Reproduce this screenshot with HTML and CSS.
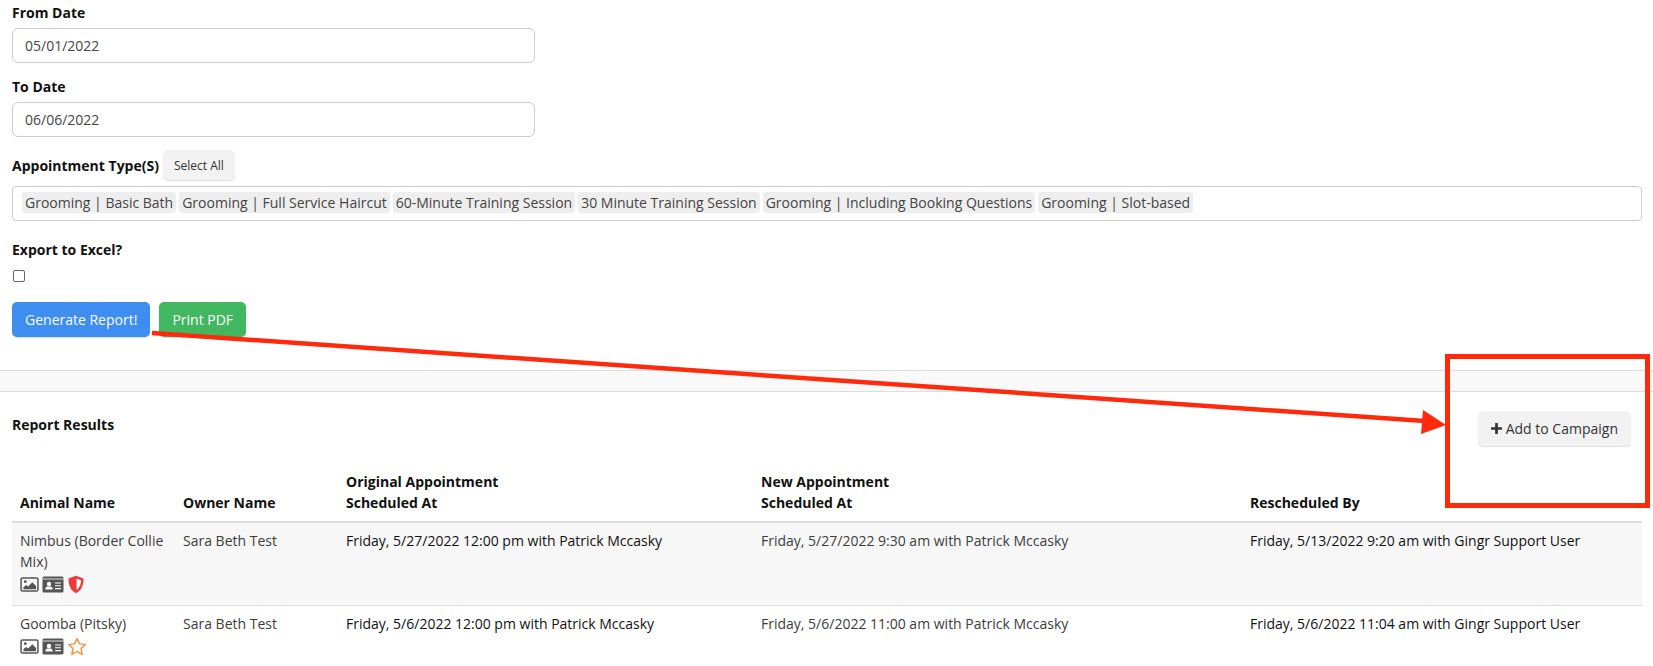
FILE: index.html
```html
<!DOCTYPE html>
<html lang="en">
<head>
<meta charset="utf-8">
<title>Report</title>
<link rel="stylesheet" href="styles.css">
</head>
<body>
<form class="filters">
  <div class="field">
    <label class="lbl">From Date</label>
    <div class="input">05/01/2022</div>
  </div>
  <div class="field">
    <label class="lbl">To Date</label>
    <div class="input">06/06/2022</div>
  </div>
  <div class="field field-types">
    <div class="lbl-row"><label class="lbl">Appointment Type(S)</label><button type="button" class="btn btn-light btn-sm">Select All</button></div>
    <div class="tags">
      <span class="tag">Grooming | Basic Bath</span>
      <span class="tag">Grooming | Full Service Haircut</span>
      <span class="tag">60-Minute Training Session</span>
      <span class="tag">30 Minute Training Session</span>
      <span class="tag">Grooming | Including Booking Questions</span>
      <span class="tag">Grooming | Slot-based</span>
    </div>
  </div>
  <div class="field">
    <label class="lbl">Export to Excel?</label>
    <div class="check-row"><span class="check"></span></div>
  </div>
  <div class="actions">
    <button type="button" class="btn btn-blue">Generate Report!</button>
    <button type="button" class="btn btn-green">Print PDF</button>
  </div>
</form>
<div class="band"></div>
<section class="results">
  <div class="results-head">
    <strong class="results-title">Report Results</strong>
    <button type="button" class="btn btn-light btn-add">
      <svg class="plus" viewBox="0 0 12 12"><path d="M6 1v10M1 6h10"/></svg>Add to Campaign</button>
  </div>
  <table class="tbl">
    <thead>
      <tr>
        <th class="c1">Animal Name</th>
        <th class="c2">Owner Name</th>
        <th class="c3">Original Appointment<br>Scheduled At</th>
        <th class="c4">New Appointment<br>Scheduled At</th>
        <th>Rescheduled By</th>
      </tr>
    </thead>
    <tbody>
      <tr class="odd">
        <td>Nimbus (Border Collie Mix)
          <div class="icons">
            <svg class="i-img" viewBox="0 0 20 16"><rect x="1" y="1" width="18" height="14" rx="1.5" fill="none" stroke="#555" stroke-width="1.6"/><circle cx="5.5" cy="5" r="1.5" fill="#555"/><path d="M3.5 13v-2l3-2.5 2 1.5 4.500-4.500 4 4v3.500z" fill="#555"/></svg>
            <svg class="i-id" viewBox="0 0 22 17"><rect x="0.500" y="0.500" width="21" height="16" rx="1.500" fill="#555"/><path d="M0.500 3h21" stroke="#f7f7f7" stroke-width="0.800"/><circle cx="7" cy="8" r="2.200" fill="#fff"/><path d="M3.200 13.500c0-2.500 1.500-3 3.800-3s3.800 0.500 3.800 3z" fill="#fff"/><path d="M13 7h6M13 9.800h6M13 12.600h6" stroke="#fff" stroke-width="1.100"/></svg>
            <svg class="i-shield" viewBox="0 0 18 20"><path d="M9 0.800 16.800 3.800c0.300 6.500-1.800 12.500-7.800 15.400C3 16.300 0.900 10.300 1.200 3.800z" fill="#ee3a3a"/><path d="M9.600 3.700 14.300 5.500c0 4-1.400 8-4.700 10.200z" fill="#fff"/></svg>
          </div>
        </td>
        <td>Sara Beth Test</td>
        <td class="dark">Friday, 5/27/2022 12:00 pm with Patrick Mccasky</td>
        <td>Friday, 5/27/2022 9:30 am with Patrick Mccasky</td>
        <td class="dark">Friday, 5/13/2022 9:20 am with Gingr Support User</td>
      </tr>
      <tr>
        <td>Goomba (Pitsky)
          <div class="icons">
            <svg class="i-img" viewBox="0 0 20 16"><rect x="1" y="1" width="18" height="14" rx="1.5" fill="none" stroke="#555" stroke-width="1.6"/><circle cx="5.5" cy="5" r="1.5" fill="#555"/><path d="M3.5 13v-2l3-2.5 2 1.5 4.500-4.500 4 4v3.500z" fill="#555"/></svg>
            <svg class="i-id" viewBox="0 0 22 17"><rect x="0.500" y="0.500" width="21" height="16" rx="1.500" fill="#555"/><path d="M0.500 3h21" stroke="#fff" stroke-width="0.800"/><circle cx="7" cy="8" r="2.200" fill="#fff"/><path d="M3.200 13.500c0-2.500 1.500-3 3.800-3s3.800 0.500 3.800 3z" fill="#fff"/><path d="M13 7h6M13 9.800h6M13 12.600h6" stroke="#fff" stroke-width="1.100"/></svg>
            <svg class="i-star" viewBox="0 0 20 19"><path d="M10 1.500 12.500 6.900 18.400 7.600 14 11.600 15.200 17.400 10 14.500 4.800 17.400 6 11.600 1.600 7.600 7.500 6.900z" fill="none" stroke="#f0923b" stroke-width="1.400" stroke-linejoin="round"/></svg>
          </div>
        </td>
        <td>Sara Beth Test</td>
        <td class="dark">Friday, 5/6/2022 12:00 pm with Patrick Mccasky</td>
        <td>Friday, 5/6/2022 11:00 am with Patrick Mccasky</td>
        <td class="dark">Friday, 5/6/2022 11:04 am with Gingr Support User</td>
      </tr>
    </tbody>
  </table>
</section>
<svg class="annot" viewBox="0 0 1653 666" aria-hidden="true">
  <path d="M152 333 1425 421" stroke="#ff2a0c" stroke-width="4.500" fill="none"/>
  <path d="M1446 425 1423 410 1421 434z" fill="#ff2a0c"/>
  <rect x="1447.500" y="356.500" width="200" height="149" fill="none" stroke="#ff2a0c" stroke-width="5"/>
</svg>
</body>
</html>
```
FILE: styles.css
```css
* { box-sizing: border-box; }
html, body { margin: 0; padding: 0; height: 666px; overflow: hidden; }
body { position: relative; background: #fff; font: 14px/21px "Open Sans", sans-serif; color: #333; }
.filters { padding: 2px 11px 0 12px; }
.field { margin-bottom: 13px; }
.field-types { margin-bottom: 18px; }
.lbl { display: block; font-weight: 700; color: #111; margin-bottom: 5px; }
.input { width: 523px; height: 35px; padding: 6px 12px; border: 1px solid #ccc; border-radius: 6px; color: #444; }
.lbl-row { display: flex; align-items: center; gap: 4px; margin-bottom: 6px; }
.lbl-row .lbl { margin: 0; }
.tags { display: flex; gap: 3px; align-items: center; height: 35px; padding: 0 9px 2px; border: 1px solid #ccc; border-radius: 4px; }
.tag { background: #eee; border-radius: 3px; padding: 0 3px; color: #444; white-space: nowrap; }
.check-row { height: 21px; display: flex; align-items: center; padding-left: 1px; margin-top: 3px; }
.check { width: 12px; height: 12px; border: 1px solid #666; border-radius: 2px; }
.actions { display: flex; gap: 9px; margin-top: 16px; }
.btn { font: inherit; border: 0; border-radius: 5px; height: 35px; padding: 0 13px; cursor: pointer; box-shadow: 0 1px 1px rgba(0,0,0,.14); }
.btn-blue { background: #3d8ef0; color: #fff; }
.btn-green { background: #41b75f; color: #fff; }
.btn-light { background: #f2f2f2; color: #333; }
.btn-sm { font-size: 12px; height: 30px; padding: 0 11px; }
.band { margin-top: 33px; height: 22px; background: #f9f9f9; border-top: 1px solid #ddd; border-bottom: 1px solid #ddd; }
.results { padding: 0 11px 0 12px; }
.results-head { display: flex; justify-content: space-between; align-items: center; margin-top: 18px; padding-right: 11px; height: 36px; }
.results-title { font-size: 14px; color: #111; align-self: flex-start; margin-top: 4px; }
.btn-add { display: flex; align-items: center; gap: 3px; padding: 0 13px 0 12px; }
.plus { width: 13px; height: 13px; stroke: #333; stroke-width: 2.500; fill: none; }
.tbl { width: 100%; border-collapse: collapse; table-layout: fixed; margin-top: 25px; }
.tbl th { text-align: left; vertical-align: bottom; font-weight: 700; color: #111; padding: 0 8px 8px; border-bottom: 2px solid #ddd; }
.c1 { width: 163px; } .c2 { width: 163px; } .c3 { width: 415px; } .c4 { width: 489px; }
.tbl td { vertical-align: top; padding: 7px 8px 10px; color: #3c3c3c; border-bottom: 1px solid #ddd; }
.tbl td.dark { color: #111; }
.odd { background: #f7f7f7; }
.icons { display: flex; align-items: center; gap: 3px; height: 21px; margin-top: 2px; }
.i-img { width: 19px; height: 15px; }
.i-id { width: 22px; height: 17px; }
.i-shield { width: 18px; height: 19px; }
.i-star { width: 20px; height: 19px; }
.annot { position: absolute; left: 0; top: 0; width: 1653px; height: 666px; pointer-events: none; }
```
